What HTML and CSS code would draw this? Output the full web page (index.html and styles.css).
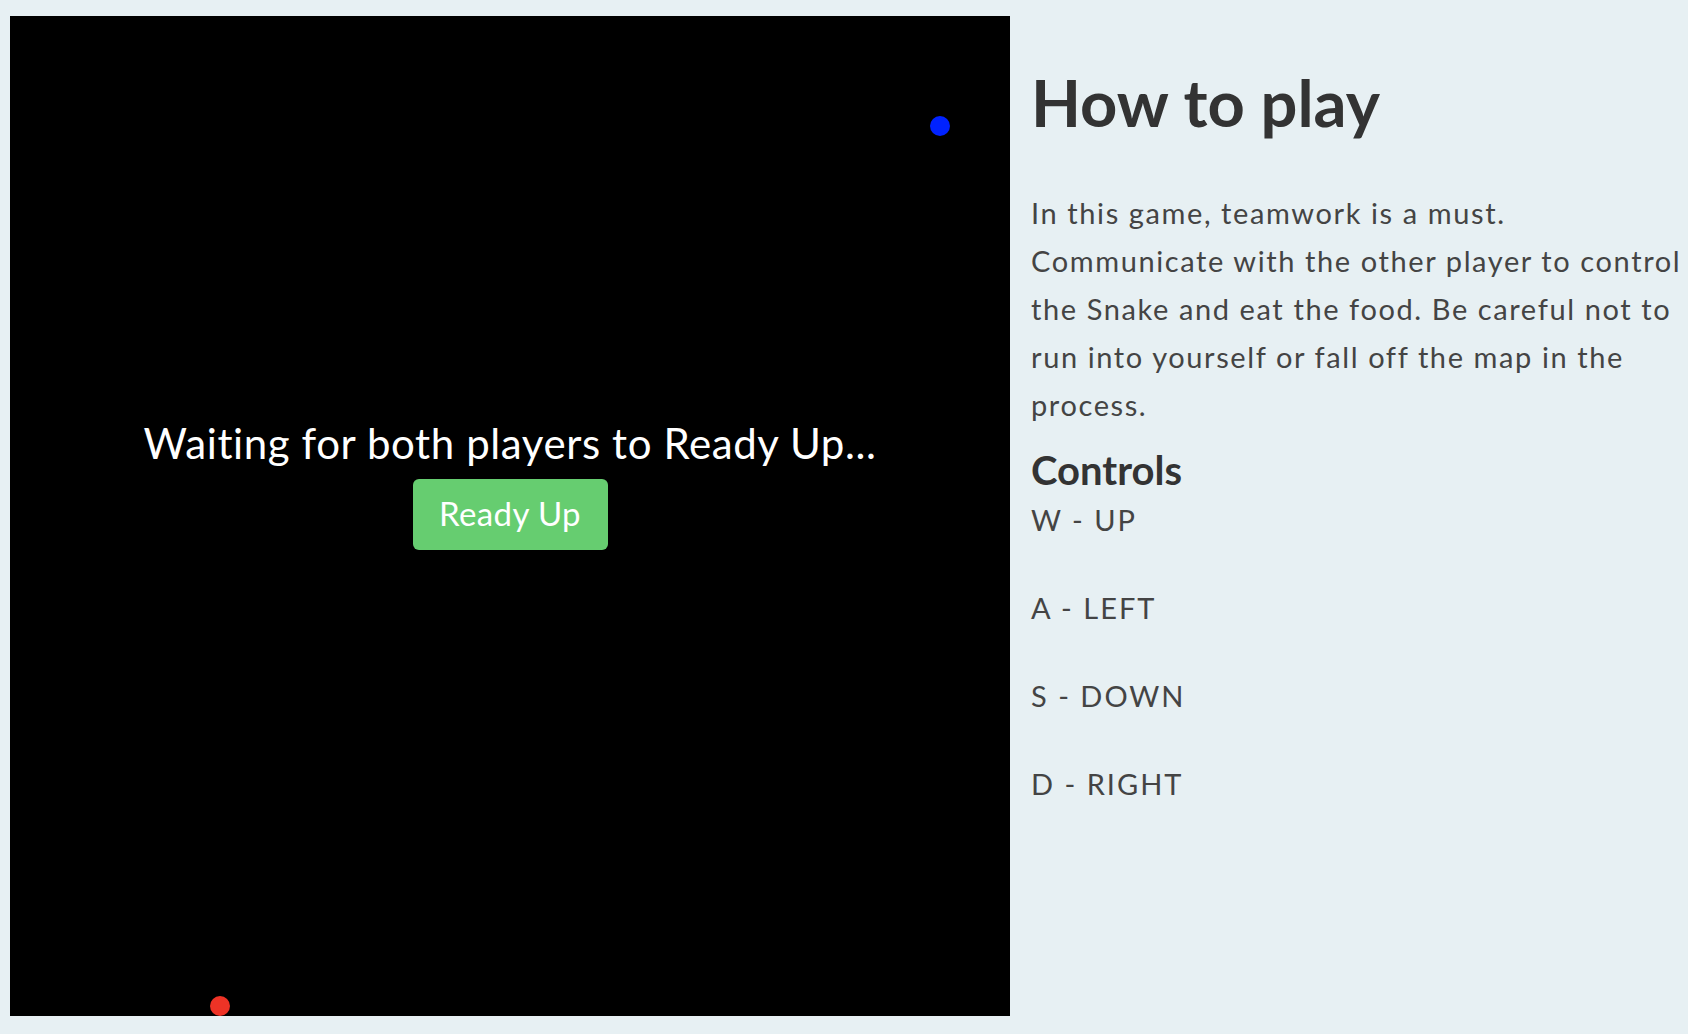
FILE: index.html
```html
<!DOCTYPE html>
<html lang="en">
<head>
<meta charset="utf-8">
<title>Snake - How to play</title>
<link rel="stylesheet" href="styles.css">
</head>
<body>
<div class="page">
  <div class="board">
    <span class="dot dot-blue"></span>
    <span class="dot dot-red"></span>
    <div class="overlay">
      <p class="waiting">Waiting for both players to Ready Up...</p>
      <button class="ready">Ready Up</button>
    </div>
  </div>
  <div class="side">
    <h1 class="title">How to play</h1>
    <p class="intro">In this game, teamwork is a must.<br>Communicate with the other player to control<br>the Snake and eat the food. Be careful not to<br>run into yourself or fall off the map in the<br>process.</p>
    <h2 class="subtitle">Controls</h2>
    <p class="key">W - UP</p>
    <p class="key">A - LEFT</p>
    <p class="key">S - DOWN</p>
    <p class="key">D - RIGHT</p>
  </div>
</div>
</body>
</html>
```
FILE: styles.css
```css
html, body {
  margin: 0;
  padding: 0;
  background: #e7f0f3;
  font-family: "Lato", "Open Sans", sans-serif;
}

.page {
  display: flex;
  align-items: flex-start;
  gap: 21px;
  padding: 16px 0 0 10px;
  height: 1018px;
  box-sizing: border-box;
  overflow: hidden;
}

.board {
  position: relative;
  flex: 0 0 1000px;
  width: 1000px;
  height: 1000px;
  background: #000;
}

.dot {
  position: absolute;
  width: 20px;
  height: 20px;
  border-radius: 50%;
}

.dot-blue {
  left: 920px;
  top: 100px;
  background: #0022ff;
}

.dot-red {
  left: 200px;
  top: 980px;
  background: #ee3326;
}

.overlay {
  position: absolute;
  inset: 0;
  display: flex;
  flex-direction: column;
  align-items: center;
  padding-top: 397px;
}

.waiting {
  margin: 0;
  color: #fff;
  font-size: 42px;
  line-height: 60px;
  letter-spacing: 0.6px;
}

.ready {
  margin-top: 6px;
  width: 195px;
  height: 71px;
  border: none;
  border-radius: 6px;
  background: #66cd70;
  color: #fff;
  font-family: inherit;
  font-size: 33px;
  letter-spacing: 0.4px;
  padding: 0 0 4px;
}

.side {
  flex: 1;
  min-width: 0;
  padding-top: 46px;
  color: #444;
  white-space: nowrap;
}

.title {
  margin: 0;
  font-size: 65px;
  line-height: 80px;
  font-weight: 700;
  color: #333;
}

.intro {
  margin: 47px 0 0;
  font-size: 29px;
  line-height: 48px;
  letter-spacing: 1.6px;
}

.subtitle {
  margin: 17px 0 2px;
  font-size: 40px;
  line-height: 48px;
  font-weight: 700;
  color: #333;
}

.key {
  margin: 0 0 40px;
  font-size: 29px;
  line-height: 48px;
  letter-spacing: 2px;
}
```
